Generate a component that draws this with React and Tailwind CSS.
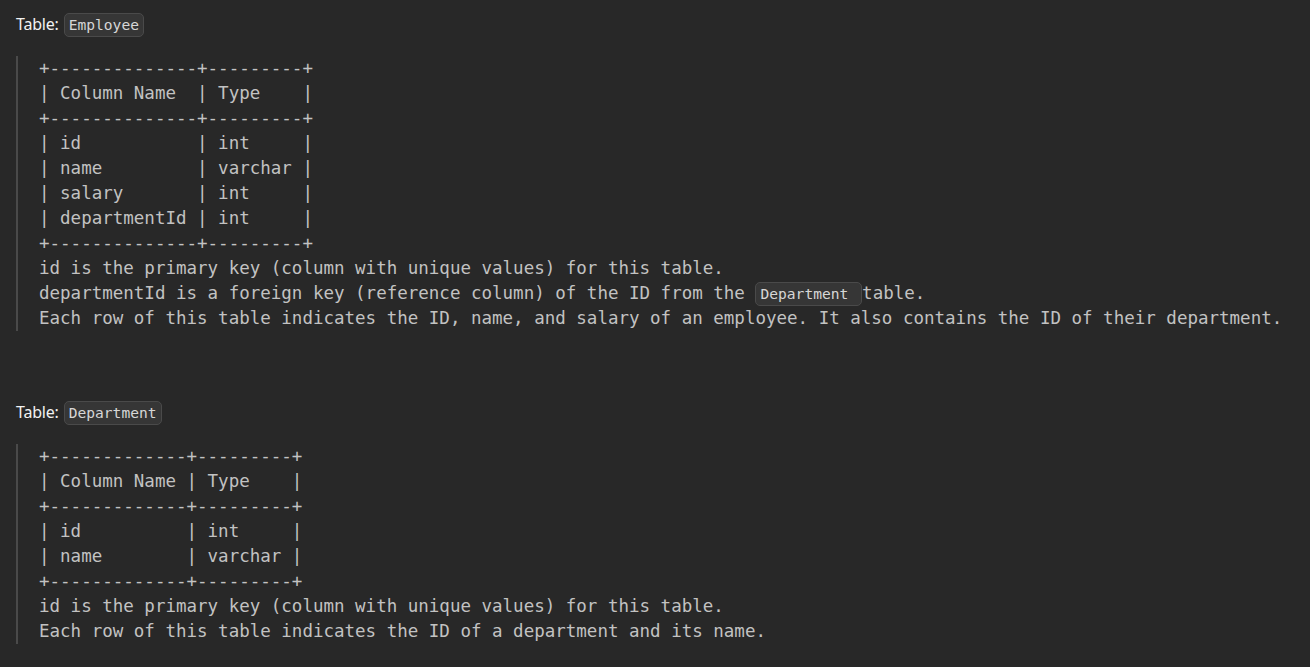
import React from "react";

const mono = { fontFamily: '"DejaVu Sans Mono", "Liberation Mono", monospace' };

function Chip({ children, inPre }) {
  return (
    <code
      style={mono}
      className={
        "inline-block h-6 rounded-[5px] border border-[#4a4a4a] bg-[#363636] px-1 text-[14.6px] leading-[22px] text-[#d6d6d6] whitespace-pre " +
        (inPre ? "align-middle" : "")
      }
    >
      {children}
    </code>
  );
}

function Title({ name }) {
  return (
    <div className="flex items-center h-6" style={{ fontFamily: '"Noto Sans", "Open Sans", sans-serif' }}>
      <span className="text-[16px] text-[#f2f2f2] tracking-[-0.2px]">Table:</span>
      <span className="ml-[5px]">
        <Chip>{name}</Chip>
      </span>
    </div>
  );
}

function Block({ lines }) {
  return (
    <div className="border-l-2 border-[#4a4a4a] pl-[21px]">
      <pre style={mono} className="m-0 text-[17.5px] leading-[25px] text-[#c2c2c2] whitespace-pre">
        {lines.map((l, i) => (
          <div key={i} className="h-[25px]">{l}</div>
        ))}
      </pre>
    </div>
  );
}

export default function App() {
  const emp = [
    "+--------------+---------+",
    "| Column Name  | Type    |",
    "+--------------+---------+",
    "| id           | int     |",
    "| name         | varchar |",
    "| salary       | int     |",
    "| departmentId | int     |",
    "+--------------+---------+",
    "id is the primary key (column with unique values) for this table.",
    <>
      {"departmentId is a foreign key (reference column) of the ID from the "}
      <Chip inPre>{"Department "}</Chip>
      {"table."}
    </>,
    "Each row of this table indicates the ID, name, and salary of an employee. It also contains the ID of their department.",
  ];
  const dep = [
    "+-------------+---------+",
    "| Column Name | Type    |",
    "+-------------+---------+",
    "| id          | int     |",
    "| name        | varchar |",
    "+-------------+---------+",
    "id is the primary key (column with unique values) for this table.",
    "Each row of this table indicates the ID of a department and its name.",
  ];
  return (
    <div className="min-h-screen w-full bg-[#282828] px-4 pt-3">
      <Title name="Employee" />
      <div className="mt-[20px]">
        <Block lines={emp} />
      </div>
      <div className="mt-[69px]">
        <Title name="Department" />
      </div>
      <div className="mt-[20px]">
        <Block lines={dep} />
      </div>
    </div>
  );
}
